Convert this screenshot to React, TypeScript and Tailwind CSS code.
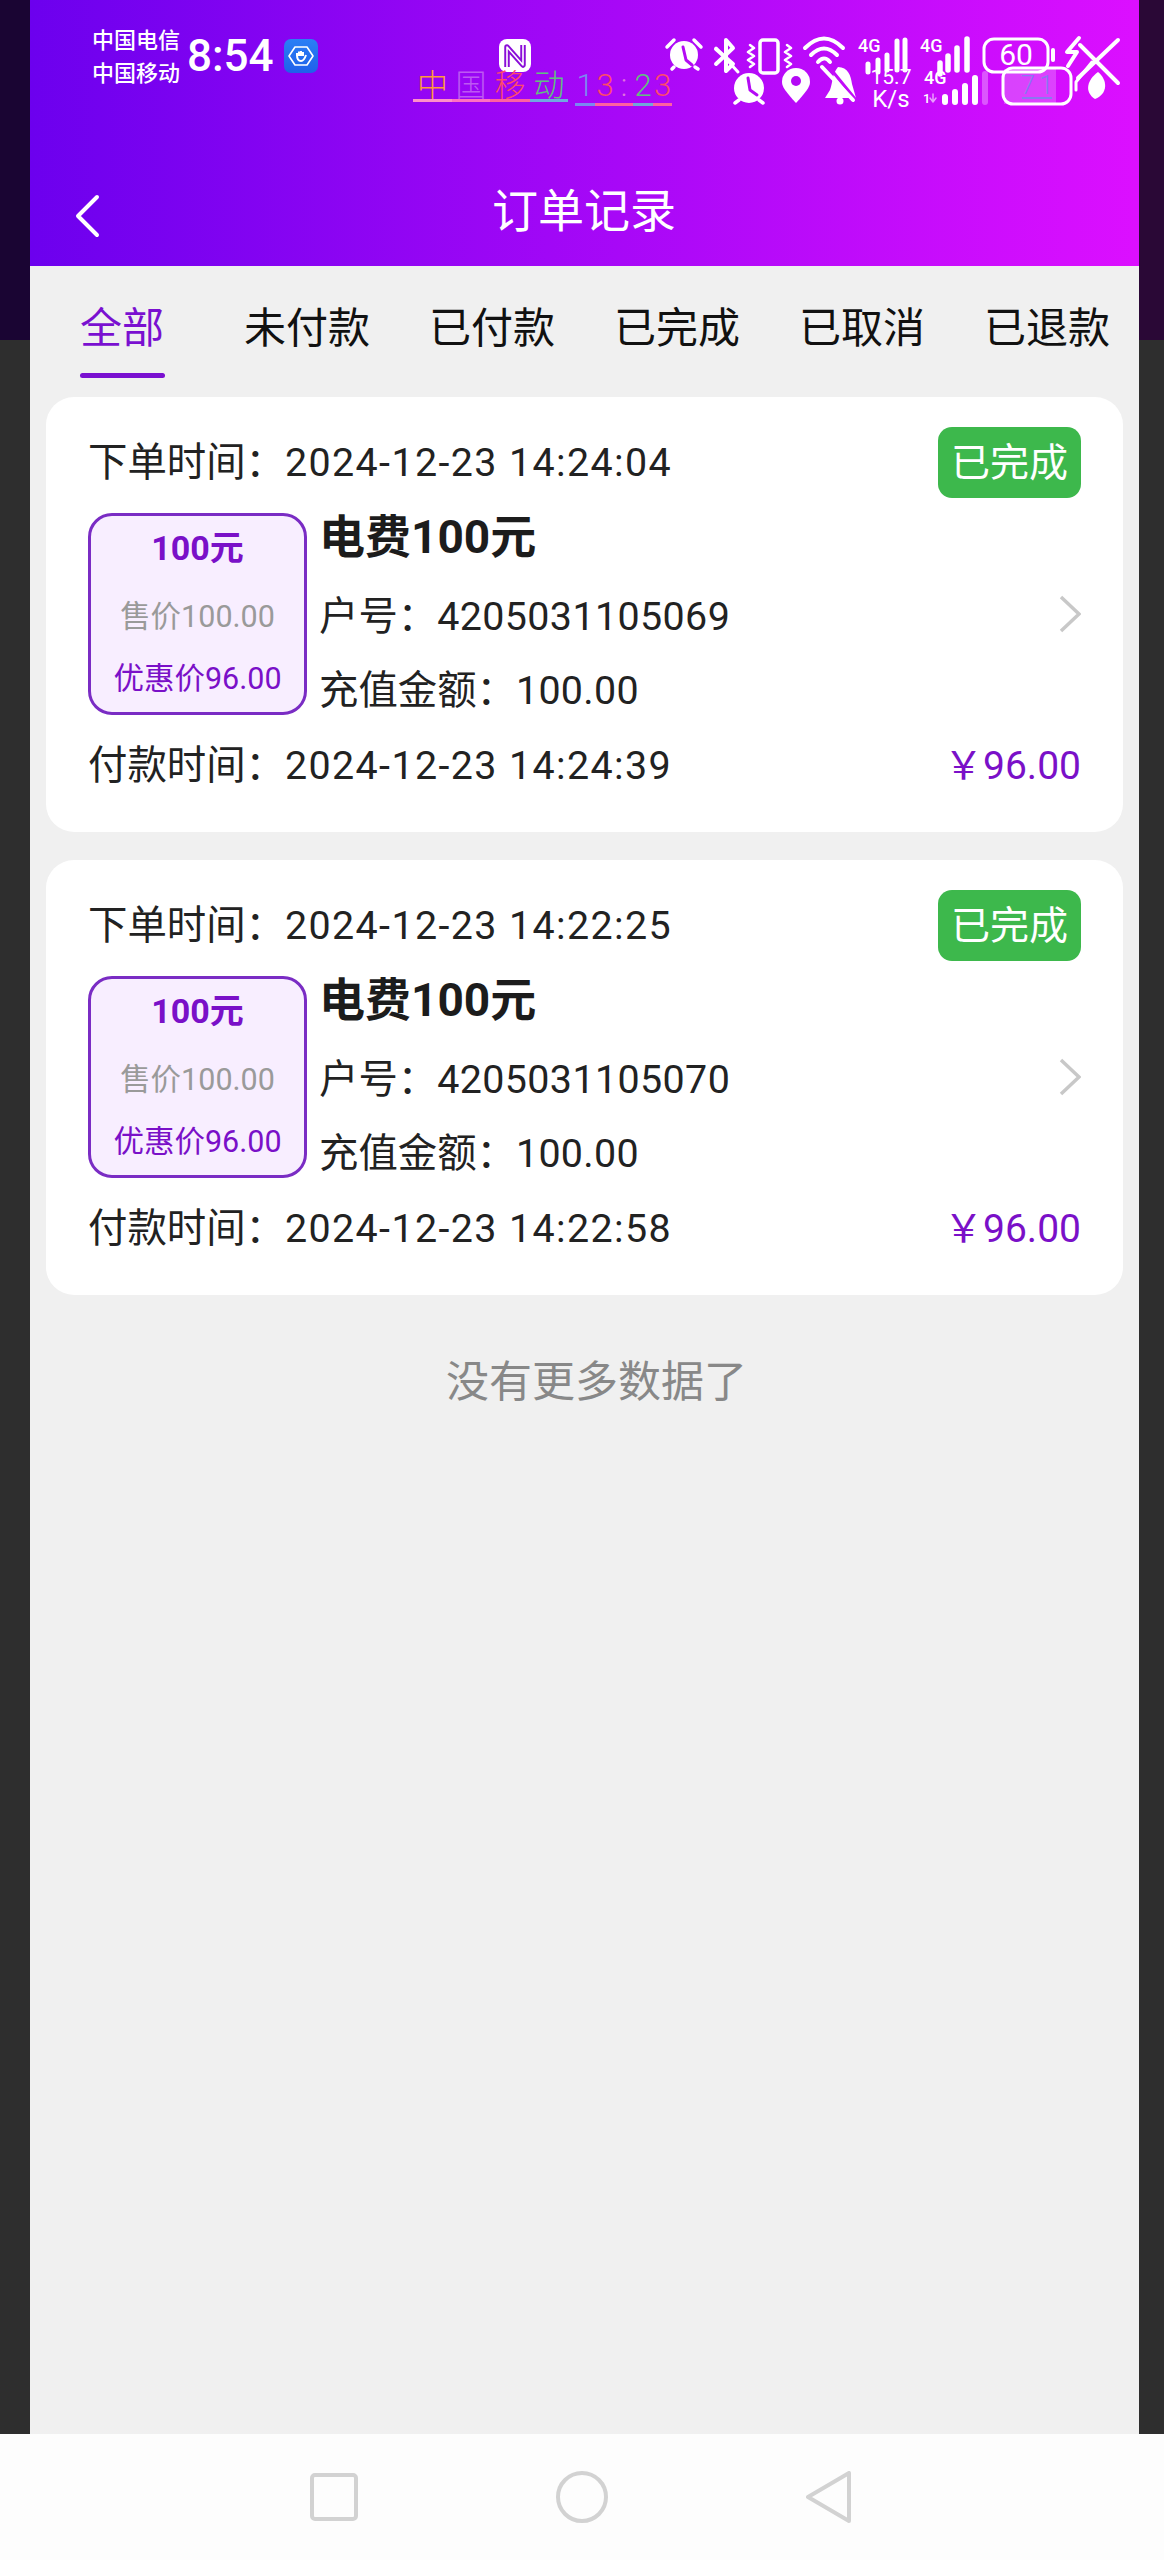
import React from "react";

const font = { fontFamily: '"Roboto","Noto Sans CJK SC",sans-serif' };
const cjk = { fontFamily: '"Noto Sans CJK SC",sans-serif' };

function OrderCard({ created, account, paid }: { created: string; account: string; paid: string }) {
  return (
    <div className="h-[435px] rounded-[28px] bg-white pl-[42px] pr-[42px] pt-[30px] text-[39.4px] leading-[50px] text-[#222222]">
      <div className="flex h-[71px] items-center justify-between">
        <div>
          下单时间：<span className="tracking-[1.4px]">{created}</span>
        </div>
        <div className="flex h-[71px] w-[143px] items-center justify-center rounded-[14px] bg-[#3db84c] text-[39px] text-white">已完成</div>
      </div>
      <div className="mt-[15px] flex h-[202px]">
        <div className="flex h-[202px] w-[219px] shrink-0 flex-col items-center rounded-[24px] border-[3px] border-[#7a2cc4] bg-[#f8eeff] pt-[12px] text-[30.5px] leading-[40px]">
          <div className="text-[34px] font-bold text-[#7a10c8]">100元</div>
          <div className="mt-[29px] text-[#9a9a9a]">售价100.00</div>
          <div className="mt-[22px] text-[#7a10c8]">优惠价96.00</div>
        </div>
        <div className="ml-[12px] flex flex-1 items-center justify-between">
          <div className="flex flex-col">
            <div className="text-[46px] font-bold leading-[48px] text-[#1c1c1c]">电费100元</div>
            <div className="mt-[31px]">
              户号：<span className="tracking-[0.4px]">{account}</span>
            </div>
            <div className="mt-[24px]">
              充值金额：<span className="tracking-[0.3px]">100.00</span>
            </div>
          </div>
          <svg width="22" height="38" viewBox="0 0 22 38" fill="none" stroke="#c8c8c8" strokeWidth="3.5">
            <path d="M2 2 L20 19 L2 36" />
          </svg>
        </div>
      </div>
      <div className="mt-[26px] flex items-center justify-between">
        <div>
          付款时间：<span className="tracking-[1.4px]">{paid}</span>
        </div>
        <div className="text-[39px] text-[#7a10c8]">￥96.00</div>
      </div>
    </div>
  );
}

function StatusIcons() {
  const P1 = "#b40af5";
  const P2 = "#c20cfa";
  return (
    <svg className="absolute left-0 top-0" width="1164" height="130" viewBox="0 0 1164 130" fill="none" stroke="white" strokeLinecap="round" strokeLinejoin="round">
      {/* alarm 1 */}
      <circle cx="684" cy="55" r="14" fill="white" stroke="none" />
      <path d="M683 47 L686 60 L692 65" stroke={P1} strokeWidth="3" />
      <path d="M667 47 L674 40 M694 40 L701 47 M672 69 L674 67 M695 67 L698 69" strokeWidth="3.5" />
      {/* bluetooth muted */}
      <path d="M716 49 L733 64 L726 71 V40 L733 48 L716 64" strokeWidth="4" />
      <path d="M716 48 L738 72" strokeWidth="3" />
      {/* vibrate */}
      <rect x="760" y="40" width="18" height="33" rx="3" strokeWidth="3.5" />
      <path d="M750 45 l4 3 l-6 4 l6 4 l-6 4 l6 4 l-4 3 M787 45 l4 3 l-6 4 l6 4 l-6 4 l6 4 l-4 3" strokeWidth="2.5" />
      {/* alarm 2 */}
      <circle cx="749" cy="88" r="15" fill="white" stroke="none" />
      <path d="M748 78 L750 90 L757 95" stroke={P1} strokeWidth="3" />
      <path d="M735 103 L739 100 M763 103 L759 100" strokeWidth="3.5" />
      {/* location */}
      <path d="M796 103 C786 92 782 87 782 82 A14 14 0 0 1 810 82 C810 87 806 92 796 103 Z" fill="white" stroke="none" />
      <circle cx="796" cy="81" r="5" fill={P1} stroke="none" />
      {/* wifi */}
      <path d="M805 48 Q824 29 843 48 M811 55 Q824 42 837 55 M818 62 Q824 55 830 62" strokeWidth="4" />
      {/* muted bell */}
      <path d="M838 67 C848 67 851 76 852 84 L856 98 H825 L830 90 C833 82 832 74 838 67 Z" fill="white" stroke="none" />
      <path d="M825 62 L856 100" stroke={P2} strokeWidth="3" />
      <path d="M822 67 L853 100" strokeWidth="4" />
      <circle cx="840" cy="101" r="3.5" fill="white" stroke="none" />
      {/* signal 1 */}
      <path d="M868 64 V72 M878 60 V72 M887 55 V70 M897 41 V70 M905 40 V70" strokeWidth="5" />
      {/* signal 2 */}
      <path d="M940 63 V74 M948 56 V70 M957 48 V70 M967 39 V70" strokeWidth="5.5" />
      <path d="M945 97 V102 M955 92 V102 M965 86 V102 M975 78 V102" strokeWidth="6" />
      <path d="M985 74 V102" strokeOpacity="0.3" strokeWidth="6" />
      <path d="M933 94 V102 M930 98 L933 102 L936 98" strokeOpacity="0.6" strokeWidth="1.5" />
      {/* batteries */}
      <rect x="984" y="39" width="64" height="33" rx="10" strokeWidth="3" />
      <path d="M1053 50 V60" strokeWidth="4" />
      <path d="M1004 69 H1056 V104 H1004 Z" fill="white" fillOpacity="0.22" stroke="none" />
      <rect x="1003" y="68" width="68" height="36" rx="10" strokeWidth="3" />
      {/* charge + leaf + close */}
      <path d="M1079 38 L1067 52 H1077 L1068 66" strokeWidth="4" />
      <path d="M1118 40 L1078 78 M1080 45 L1118 83" strokeWidth="4" />
      <path d="M1076 90 V82 L1092 62" strokeWidth="3" />
      <path d="M1098 72 C1108 80 1108 94 1095 99 C1084 92 1087 80 1098 72 Z" fill="white" stroke="none" />
    </svg>
  );
}

function StatusBar() {
  return (
    <div className="absolute left-0 top-0 h-[130px] w-[1164px] text-white">
      <div className="absolute left-[92px] top-[24px] text-[22px] font-medium leading-[33px]">
        <div>中国电信</div>
        <div>中国移动</div>
      </div>
      <div className="absolute left-[187px] top-[31px] text-[44px] font-medium leading-[50px]">8:54</div>
      <div className="absolute left-[284px] top-[39px] flex h-[34px] w-[34px] items-center justify-center rounded-[7px] bg-[linear-gradient(to_bottom,#2a80f5,#1f60ea)]">
        <svg width="26" height="26" viewBox="0 0 26 26" fill="none" stroke="white" strokeWidth="1.6" strokeLinejoin="round">
          <path d="M7 4 H19 L25 13 L19 22 H7 L1 13 Z" />
          <path d="M9 13 V10 M11 13 V8.5 M13 13 V8 M15 13 V9 M9 12 C9 17 11 18 13 18 C16 18 17 15 18 12" strokeWidth="2" />
        </svg>
      </div>
      <div className="absolute left-[499px] top-[39px] flex h-[33px] w-[32px] items-center justify-center rounded-[8px] bg-white">
        <svg width="22" height="26" viewBox="0 0 22 26" fill="none" strokeLinejoin="round">
          <path d="M3 24 V4 L19 22 V2" stroke="#8a0ed8" strokeWidth="5.5" />
          <path d="M3 24 V4 L19 22 V2" stroke="white" strokeWidth="1.6" />
        </svg>
      </div>
      <div className="absolute left-[413px] top-[62px] flex h-[40px] text-[31px] font-light leading-[42px]" style={cjk}>
        <span className="w-[39px] border-b-[3px] border-[#ff8fc8] text-center text-[#ff9a3a]">中</span>
        <span className="w-[38px] border-b-[3px] border-[#ff70c0] text-center text-[#bd58f2]">国</span>
        <span className="w-[40px] border-b-[3px] border-[#ff60a0] text-center text-[#ff4a6a]">移</span>
        <span className="w-[38px] border-b-[3px] border-[#70a8e0] text-center text-[#60c080]">动</span>
      </div>
      <div className="absolute left-[575px] top-[72px] flex h-[34px] text-[31px] font-light leading-[28px]">
        <span className="w-[20px] border-b-[3px] border-[#7a88f0] text-center text-[#7a88f0]">1</span>
        <span className="w-[20px] border-b-[3px] border-[#ff60a0] text-center text-[#ff4a6a]">3</span>
        <span className="w-[18px] border-b-[3px] border-[#ff60a0] text-center text-[#e070e0]">:</span>
        <span className="w-[20px] border-b-[3px] border-[#70a8d8] text-center text-[#60c080]">2</span>
        <span className="w-[19px] border-b-[3px] border-[#ff60a0] text-center text-[#ff4a6a]">3</span>
      </div>
      <StatusIcons />
      <div className="absolute left-[858px] top-[37px] text-[18px] font-medium leading-[18px]">4G</div>
      <div className="absolute left-[920px] top-[37px] text-[18px] font-medium leading-[18px]">4G</div>
      <div className="absolute left-[924px] top-[69px] text-[18px] font-medium leading-[18px]">4G</div>
      <div className="absolute left-[923px] top-[92px] text-[13px] font-medium leading-[13px]">1</div>
      <div className="absolute left-[870px] top-[67px] w-[42px] text-center text-[21px] leading-[20px]">15.7</div>
      <div className="absolute left-[871px] top-[87px] w-[40px] text-center text-[24px] leading-[24px]">K/s</div>
      <div className="absolute left-[986px] top-[39px] w-[60px] text-center text-[30px] leading-[32px]">60</div>
      <div className="absolute left-[1022px] top-[72px] flex h-[27px] w-[30px] justify-center gap-[4px] border-b-2 border-[#8a78f0] text-[26px] font-light leading-[26px] text-[#8a78f0]">
        <span>7</span>
        <span>1</span>
      </div>
    </div>
  );
}

export default function App() {
  return (
    <div className="relative flex h-[2560px] w-[1164px] flex-col overflow-hidden bg-[#2e2e2e]" style={font}>
      <div className="flex flex-1">
        <div className="flex w-[30px] flex-col">
          <div className="h-[340px] bg-[#1a0533]" />
        </div>
        <main className="flex w-[1109px] flex-col bg-[#f0f0f0]">
          <header className="flex h-[266px] shrink-0 items-end bg-[linear-gradient(to_right,#6c00ee,#dc0fff)] pb-[27px] text-white">
            <svg width="30" height="46" viewBox="0 0 30 46" fill="none" stroke="white" strokeWidth="4" strokeLinecap="round" strokeLinejoin="round" className="ml-[44px]">
              <path d="M23 4 L4 23 L23 42" />
            </svg>
            <div className="ml-[388px] text-[46px] leading-[56px]">订单记录</div>
          </header>
          <nav className="flex h-[112px] shrink-0 items-start pl-[50px] pt-[38px] text-[42px] leading-[50px] text-[#111111]">
            <div className="flex h-[74px] w-[85px] flex-col justify-between text-[#7a10d0]">
              <span>全部</span>
              <span className="h-[5px] rounded-full bg-[#7a10d0]" />
            </div>
            <span className="ml-[79px]">未付款</span>
            <span className="ml-[59px]">已付款</span>
            <span className="ml-[59px]">已完成</span>
            <span className="ml-[59px]">已取消</span>
            <span className="ml-[59px]">已退款</span>
          </nav>
          <div className="flex flex-col gap-[28px] px-[16px] pt-[19px]">
            <OrderCard created="2024-12-23 14:24:04" account="4205031105069" paid="2024-12-23 14:24:39" />
            <OrderCard created="2024-12-23 14:22:25" account="4205031105070" paid="2024-12-23 14:22:58" />
          </div>
          <div className="mt-[60px] pl-[24px] text-center text-[43px] leading-[54px] text-[#888888]">没有更多数据了</div>
        </main>
        <div className="flex w-[25px] flex-col">
          <div className="h-[340px] bg-[#2a0836]" />
        </div>
      </div>
      <footer className="flex h-[126px] shrink-0 items-center justify-center gap-[198px] bg-[#fdfdfd] pr-[3px]">
        <svg width="48" height="48" viewBox="0 0 48 48" fill="none" stroke="#d2d2d2" strokeWidth="4"><rect x="2" y="2" width="44" height="44" rx="3" /></svg>
        <svg width="52" height="52" viewBox="0 0 52 52" fill="none" stroke="#d2d2d2" strokeWidth="4"><circle cx="26" cy="26" r="24" /></svg>
        <svg width="45" height="52" viewBox="0 0 45 52" fill="none" stroke="#d2d2d2" strokeWidth="4" strokeLinejoin="round"><path d="M43 2 V50 L2 26 Z" /></svg>
      </footer>
      <StatusBar />
    </div>
  );
}
